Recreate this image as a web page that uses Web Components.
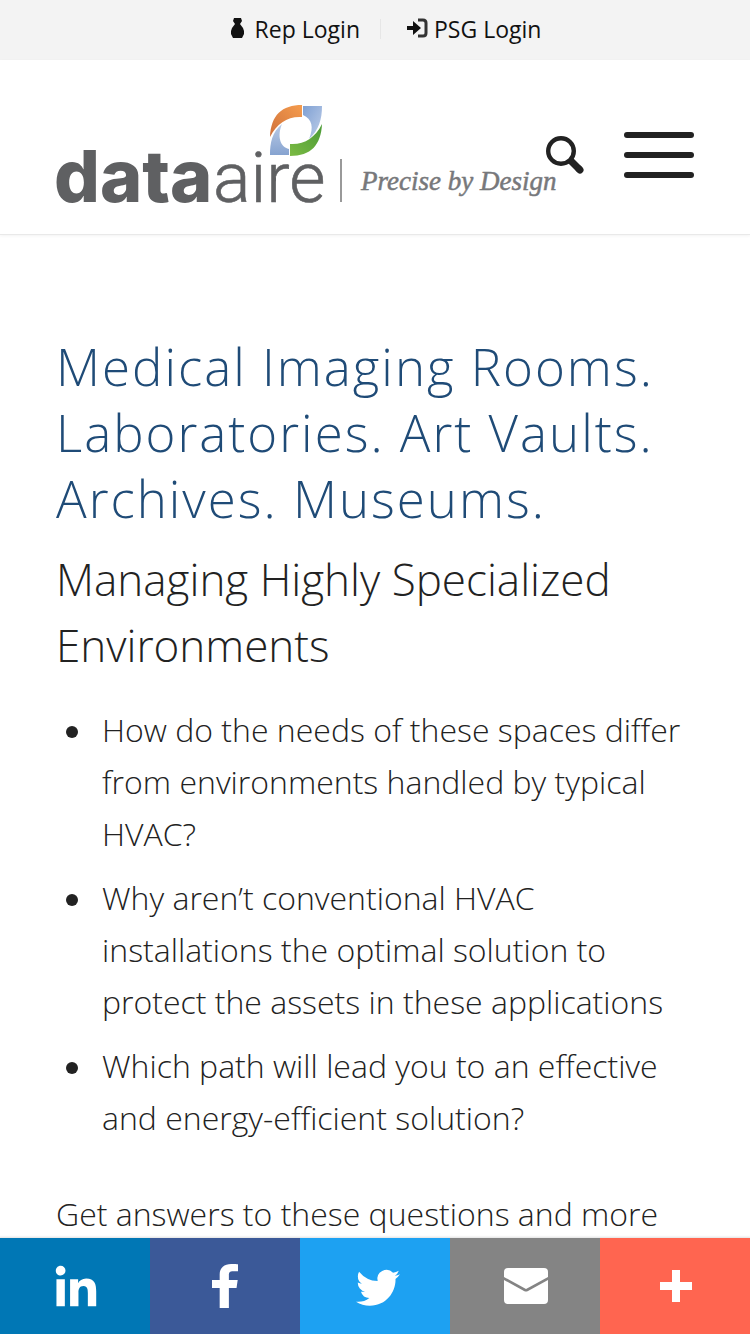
<!DOCTYPE html>
<html lang="en">
<head>
<meta charset="utf-8">
<meta name="viewport" content="width=device-width, initial-scale=1">
<title>Data Aire | Precise by Design</title>
<style>
  body { margin: 0; background: #fff; color: #222; font-family: "Open Sans", sans-serif; }
</style>
</head>
<body>
<login-bar></login-bar>
<site-header>
  <site-logo slot="brand"></site-logo>
</site-header>
<page-article>
  <span slot="title">Medical Imaging Rooms. Laboratories. Art Vaults. Archives. Museums.</span>
  <span slot="subtitle">Managing Highly Specialized Environments</span>
  <bullet-item slot="points">How do the needs of these spaces differ from environments handled by typical HVAC?</bullet-item>
  <bullet-item slot="points">Why aren’t conventional HVAC installations the optimal solution to protect the assets in these applications</bullet-item>
  <bullet-item slot="points">Which path will lead you to an effective and energy-efficient solution?</bullet-item>
  <span slot="closing">Get answers to these questions and more</span>
</page-article>
<share-bar></share-bar>

<script>
const define = (name, html) => {
  customElements.define(name, class extends HTMLElement {
    constructor() {
      super();
      this.attachShadow({ mode: "open" }).innerHTML = html;
    }
  });
};

define("login-bar", `
<style>
  :host { display: block; background: #f3f3f3; }
  nav { display: flex; justify-content: center; align-items: center; box-sizing: border-box; height: 60px; padding: 0 0 2px 20px; }
  a { display: flex; align-items: center; gap: 6px; color: #111; text-decoration: none; font-size: 23px; line-height: 28px; font-weight: 500; }
  a + a { margin-left: 20px; padding-left: 26px; border-left: 1px solid #e6e6e6; height: 20px; }
  svg { display: block; margin-bottom: 2px; }
</style>
<nav aria-label="Logins">
  <a href="#rep"><svg width="20" height="20" viewBox="0 0 20 20"><path d="M5 0h7l1 3-2 3 3 4 1 3v3l-2 4H4l-2-4v-3l1-3 3-4-2-3z" fill="#111"/></svg>Rep Login</a>
  <a href="#psg"><svg width="21" height="20" viewBox="0 0 21 20"><path d="M11 2h5q3 0 3 3v10q0 3-3 3h-5" fill="none" stroke="#333" stroke-width="3"/><path d="M0 8h6V3l8 7-8 7v-5H0z" fill="#111"/></svg>PSG Login</a>
</nav>`);

define("site-logo", `
<style>
  :host { display: block; }
  a { display: block; }
  svg { display: block; overflow: visible; }
</style>
<a href="#home" aria-label="Data Aire home">
<svg width="500" height="110" viewBox="56 100 500 110">
  <defs>
    <linearGradient id="o" x1="0" y1="1" x2="1" y2="0"><stop offset="0" stop-color="#cf713c"/><stop offset="1" stop-color="#f59c4d"/></linearGradient>
    <linearGradient id="b" x1="0" y1="0" x2="1" y2="1"><stop offset="0" stop-color="#7fa0d3"/><stop offset="1" stop-color="#bfcfe9"/></linearGradient>
    <linearGradient id="c" x1="0" y1="0" x2="0" y2="1"><stop offset="0" stop-color="#b9cae6"/><stop offset="1" stop-color="#86a3d0"/></linearGradient>
    <linearGradient id="g" x1="0" y1="1" x2="1" y2="0"><stop offset="0" stop-color="#7bba43"/><stop offset="1" stop-color="#4a9a36"/></linearGradient>
  </defs>
  <text x="54" y="202" font-family="Inter, sans-serif" font-size="72" font-weight="800" fill="#5f6062">data</text>
  <text x="213" y="202" font-family="Roboto, sans-serif" font-size="70" font-weight="300" stroke="#5f6062" stroke-width=".6" fill="#5f6062">aire</text>
  <path d="M270 137C271 115 282 105 302 105V117C288 116 277 123 270 137Z" fill="url(#o)"/>
  <path d="M303 106H322C322 119 319 130 309 139C314 127 312 119 303 115Z" fill="url(#b)"/>
  <path d="M282 124C277 136 280 147 289 149V155H270C270 143 272 132 282 124Z" fill="url(#c)"/>
  <path d="M322 124C321 145 311 156 290 156V144C304 145 315 138 322 124Z" fill="url(#g)"/>
  <path d="M341 159V202" stroke="#999" stroke-width="2"/>
  <text x="361" y="190" font-family="'Liberation Serif', serif" font-style="italic" font-size="27" stroke="#77787b" stroke-width=".5" fill="#77787b">Precise by Design</text>
</svg></a>`);

define("site-header", `
<style>
  :host { display: block; border-bottom: 1px solid #e9e9e9; box-shadow: 0 1px 3px #0000000d; }
  header { display: flex; align-items: center; height: 174px; padding: 0 56px; }
  ::slotted(*) { flex: none; width: 500px; margin-top: 16px; }
  button { flex: none; border: 0; background: none; padding: 0; color: #222; }
  .search { margin-left: -12px; margin-top: 16px; }
  .menu { margin-left: auto; margin-top: 16px; }
  svg { display: block; }
</style>
<header>
  <slot name="brand"></slot>
  <button class="search" aria-label="Search"><svg width="42" height="42" viewBox="0 0 42 42"><circle cx="17" cy="17" r="12.8" fill="none" stroke="currentColor" stroke-width="4.4"/><path d="M26 26L36 36" stroke="currentColor" stroke-width="7"/><path d="M35 35L36 36" stroke="currentColor" stroke-width="7" stroke-linecap="round"/></svg></button>
  <button class="menu" aria-label="Menu"><svg width="70" height="46" viewBox="0 0 70 46" fill="currentColor"><rect width="70" height="6" rx="3"/><rect y="20" width="70" height="6" rx="3"/><rect y="40" width="70" height="6" rx="3"/></svg></button>
</header>`);

define("bullet-item", `
<style>
  :host { display: flex; gap: 24px; padding-left: 10px; }
  .dot { flex: none; width: 12px; height: 12px; margin-top: 22px; border-radius: 50%; background: #222; }
</style>
<span class="dot"></span><span><slot></slot></span>`);
for (const item of document.querySelectorAll("bullet-item")) item.setAttribute("role", "listitem");

define("page-article", `
<style>
  :host { display: block; font-weight: 300; }
  main { padding: 98px 56px 94px; }
  h1, h2, p { margin: 0; font-weight: 300; }
  h1 { color: #1f4b77; font-size: 51px; line-height: 66px; letter-spacing: 2px; }
  h2 { margin-top: 15px; font-size: 44px; line-height: 66px; }
  .points { display: flex; flex-direction: column; gap: 12px; margin-top: 26px; }
  .points, p { font-size: 32px; line-height: 52px; }
  p { margin-top: 44px; }
</style>
<main>
  <h1><slot name="title"></slot></h1>
  <h2><slot name="subtitle"></slot></h2>
  <div class="points" role="list"><slot name="points"></slot></div>
  <p><slot name="closing"></slot></p>
</main>`);

define("share-bar", `
<style>
  :host { display: block; position: fixed; left: 0; right: 0; bottom: 0; box-shadow: 0 0 2px 1px #0000001f; }
  nav { display: grid; grid-template-columns: repeat(5, 1fr); height: 96px; }
  a { display: flex; align-items: center; justify-content: center; padding-left: 2px; }
  svg { display: block; fill: #fff; }
  .in { background: #0077b5; } .fb { background: #3b5998; } .tw { background: #1da1f2; }
  .em { background: #848484; } .more { background: #ff6550; }
</style>
<nav aria-label="Share">
  <a class="in" href="#linkedin" aria-label="LinkedIn"><svg width="64" height="64" viewBox="0 0 32 32"><path d="M6.227 12.610h4.190v13.480h-4.190V12.610zm2.095-6.700a2.430 2.430 0 0 1 0 4.860c-1.344 0-2.428-1.090-2.428-2.430s1.084-2.430 2.428-2.430m4.720 6.700h4.020v1.840h.058c.56-1.058 1.927-2.176 3.965-2.176 4.238 0 5.020 2.792 5.020 6.420v7.395h-4.183v-6.560c0-1.564-.03-3.574-2.178-3.574-2.180 0-2.514 1.700-2.514 3.460v6.668h-4.187V12.610z"/></svg></a>
  <a class="fb" href="#facebook" aria-label="Facebook"><svg width="64" height="64" viewBox="0 0 32 32"><path d="M22 5.160c-.406-.054-1.806-.16-3.430-.16-3.400 0-5.733 1.825-5.733 5.170v2.882H9v3.913h3.837V27h4.604V16.965h3.823l.587-3.913h-4.410v-2.500c0-1.123.347-1.903 2.198-1.903H22V5.160z"/></svg></a>
  <a class="tw" href="#twitter" aria-label="Twitter"><svg width="64" height="64" viewBox="0 0 32 32"><path d="M27.996 10.116c-.810.360-1.680.602-2.592.710a4.526 4.526 0 0 0 1.984-2.496 9.037 9.037 0 0 1-2.866 1.095 4.513 4.513 0 0 0-7.690 4.116 12.810 12.810 0 0 1-9.300-4.715 4.490 4.490 0 0 0-.612 2.270 4.510 4.510 0 0 0 2.008 3.755 4.495 4.495 0 0 1-2.044-.564v.057a4.515 4.515 0 0 0 3.620 4.425 4.520 4.520 0 0 1-2.038.077 4.517 4.517 0 0 0 4.216 3.134 9.055 9.055 0 0 1-5.604 1.930A9.180 9.180 0 0 1 6 23.850a12.773 12.773 0 0 0 6.918 2.027c8.300 0 12.840-6.876 12.840-12.840 0-.195-.005-.390-.014-.583a9.172 9.172 0 0 0 2.252-2.336"/></svg></a>
  <a class="em" href="#email" aria-label="Email"><svg width="44" height="36" viewBox="0 0 44 36"><path d="M0 9V4Q0 0 4 0H40Q44 0 44 4V9L22 21Z"/><path d="M0 12L20 23Q22 24 24 23L44 12V32Q44 36 40 36H4Q0 36 0 32Z"/></svg></a>
  <a class="more" href="#more" aria-label="More"><svg width="32" height="32" viewBox="0 0 32 32"><path d="M12 0h8v12h12v8H20v12h-8V20H0v-8h12z"/></svg></a>
</nav>`);
</script>
</body>
</html>
